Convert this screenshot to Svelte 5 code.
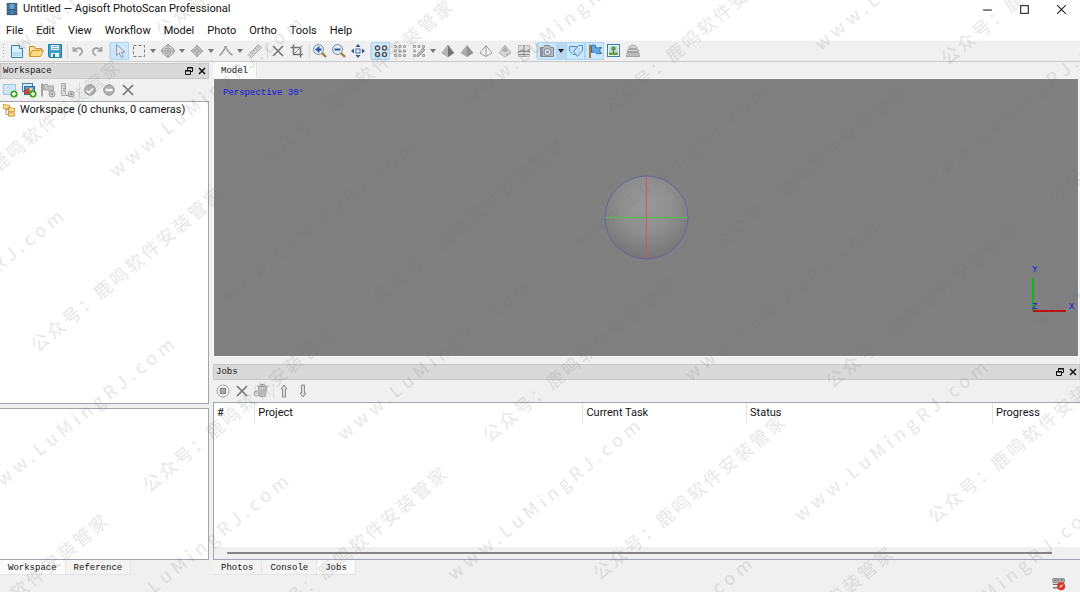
<script lang="ts">
    type Tool = { icon: string; label: string; active?: boolean; menu?: boolean };

    const menus = ["File", "Edit", "View", "Workflow", "Model", "Photo", "Ortho", "Tools", "Help"];

    const toolGroups: Tool[][] = [
        [
            { icon: "new", label: "New" },
            { icon: "open", label: "Open" },
            { icon: "save", label: "Save" },
        ],
        [
            { icon: "undo", label: "Undo" },
            { icon: "redo", label: "Redo" },
        ],
        [
            { icon: "pointer", label: "Navigation", active: true },
            { icon: "marquee", label: "Rectangle Selection", menu: true },
            { icon: "region", label: "Move Region", menu: true },
            { icon: "move", label: "Move Object", menu: true },
            { icon: "polyline", label: "Draw Polyline", menu: true },
            { icon: "ruler", label: "Ruler" },
        ],
        [
            { icon: "remove", label: "Delete Selection" },
            { icon: "crop", label: "Crop Selection" },
        ],
        [
            { icon: "zoomin", label: "Zoom In" },
            { icon: "zoomout", label: "Zoom Out" },
            { icon: "reset", label: "Reset View" },
        ],
        [
            { icon: "points", label: "Point Cloud", active: true },
            { icon: "dense", label: "Dense Cloud" },
            { icon: "classes", label: "Dense Cloud Classes", menu: true },
            { icon: "shaded", label: "Model Shaded" },
            { icon: "solid", label: "Model Solid" },
            { icon: "wire", label: "Model Wireframe" },
            { icon: "textured", label: "Model Textured" },
            { icon: "tiled", label: "Tiled Model" },
        ],
        [
            { icon: "camera", label: "Show Cameras", active: true, menu: true },
            { icon: "shapes", label: "Show Shapes", active: true },
            { icon: "flag", label: "Show Markers", active: true },
            { icon: "image", label: "Show Images" },
            { icon: "align", label: "Show Aligned Chunks" },
        ],
    ];

    const workspaceTools: Tool[] = [
        { icon: "addchunk", label: "Add Chunk" },
        { icon: "addphotos", label: "Add Photos" },
        { icon: "addmarker", label: "Add Marker" },
        { icon: "addscale", label: "Add Scale Bar" },
    ];
    const workspaceActions: Tool[] = [
        { icon: "enable", label: "Enable" },
        { icon: "disable", label: "Disable" },
        { icon: "remove", label: "Remove Items" },
    ];
    const jobTools: Tool[] = [
        { icon: "stop", label: "Stop" },
        { icon: "remove", label: "Remove" },
        { icon: "clear", label: "Clear" },
    ];
    const jobMoves: Tool[] = [
        { icon: "up", label: "Move Up" },
        { icon: "down", label: "Move Down" },
    ];

    const columns = [
        { title: "#", width: 4.7 },
        { title: "Project", width: 37.9 },
        { title: "Current Task", width: 18.9 },
        { title: "Status", width: 28.4 },
        { title: "Progress", width: 10.1 },
    ];

    let leftTab = $state("Workspace");
    let bottomTab = $state("Jobs");

    // centre of the first character of each mark
    const cnMarks = [
        [165, 27], [-63, 215], [40, 342], [152, 482], [-75, 669], [264, 622],
        [270, 155], [382, 293], [492, 432], [602, 570], [612, 105], [723, 240],
        [835, 378], [937, 513], [710, 702], [950, 55], [1058, 193],
    ];
    const urlMarks = [
        [24, 43], [118, 170], [230, 295], [346, 433], [456, 573], [-121, 363],
        [-10, 491], [104, 628], [473, 98], [583, 240], [693, 374], [803, 514],
        [568, 711], [823, 43], [933, 178], [1043, 320], [915, 655],
    ];

    const plus = `<circle cx="12" cy="12" r="3.6" fill="#43a31c"/><path d="M12 10v4M10 12h4" stroke="#fff" stroke-width="1.4"/>`;
    const grayPlus = `<circle cx="12" cy="12" r="3" fill="#ddd" stroke="#999"/><path d="M12 10.500v3M10.500 12h3" stroke="#888"/>`;

    const icons: Record<string, string> = {
        film: `<rect x="2" y="1" width="12" height="14" fill="#34495c"/><rect x="5" y="2" width="6" height="6" fill="#5ba8df"/><rect x="5" y="9" width="6" height="5" fill="#3d83c1"/><path d="M3.500 1.500v13M12.500 1.500v13" stroke="#b9c8d4" stroke-dasharray="1.500 1.500"/>`,
        new: `<path d="M2.500 2.500h8l3 3v9h-11z" fill="#d9effb" stroke="#2e83ae"/><path d="M10.500 2.500v3h3" fill="#fff" stroke="#2e83ae"/><path d="M4 9h8v4H4z" fill="#b8ddf2"/>`,
        open: `<path d="M1.500 13.500v-10h5l1 2h6v3" fill="#f7dda0" stroke="#c88a20"/><path d="M1.500 13.500l3-6h11l-3 6z" fill="#ffd982" stroke="#d59a2c"/>`,
        save: `<path d="M1.500 1.500h13v13h-12l-1-1z" fill="#3f9fcd" stroke="#2479a5"/><path d="M4 2h8v5H4z" fill="#f3fafd"/><path d="M4 10h8v4H4z" fill="#e3f1f8"/><path d="M5 3.500h6M5 5.500h6" stroke="#79a9c0"/><path d="M6 11h2v3H6z" fill="#2479a5"/>`,
        undo: `<path d="M3.500 4v4h4M4 7.500c2-3 7-3.500 8 0 .5 2.500-1 4-3 5" fill="none" stroke="#a0a0a0" stroke-width="1.700"/>`,
        redo: `<path d="M12.500 4v4h-4M12 7.500c-2-3-7-3.500-8 0-.5 2.500 1 4 3 5" fill="none" stroke="#a0a0a0" stroke-width="1.700"/>`,
        pointer: `<path d="M4.500 1.500v11l2.800-2.500 2 4.500 2.200-1-2-4.300h3.700z" fill="#e4e8ec" stroke="#8b98a5"/>`,
        marquee: `<rect x="2.500" y="2.500" width="11" height="11" fill="none" stroke="#7d7d7d" stroke-dasharray="3 2"/>`,
        region: `<ellipse cx="8" cy="8" rx="6.500" ry="5" fill="#d4d4d4" stroke="#b4b4b4"/><path d="M8 1v14M1 8h14M5.500 3.500L8 1l2.500 2.500M5.500 12.500L8 15l2.500-2.500M4 5.500L1.500 8 4 10.500M12 5.500L14.500 8 12 10.500" fill="none" stroke="#9c9c9c"/><rect x="5.500" y="5.500" width="5" height="5" fill="none" stroke="#a5a5a5"/>`,
        move: `<path d="M8 2l2.500 3H9v2h2V5.500L14 8l-3 2.500V9H9v2h1.500L8 14l-2.500-3H7V9H5v1.500L2 8l3-2.500V7h2V5H5.500z" fill="#bbb" stroke="#a5a5a5"/>`,
        polyline: `<path d="M1.500 12.500l2-2 4-6 4.500 6 2.500 1.500" fill="none" stroke="#999" stroke-width="1.500"/><rect x="6" y="3" width="3" height="3" fill="#aaa"/>`,
        ruler: `<path d="M1.500 11.500l10-10 3 3-10 10z" fill="#d2d2d2" stroke="#b0b0b0"/><path d="M4 9l2 2M6 7l1.500 1.500M8 5l2 2M10 3l1.500 1.500" stroke="#a5a5a5"/>`,
        remove: `<path d="M3 3l10 10M13 3L3 13" stroke="#777" stroke-width="1.700"/>`,
        crop: `<path d="M4.500 1.500v10H14M1.500 4.500h10v10" fill="none" stroke="#777" stroke-width="1.500"/><path d="M4.500 11.500l9-9" stroke="#999"/>`,
        zoomin: `<path d="M10 10l4 4" stroke="#a87b38" stroke-width="2.400"/><circle cx="6.500" cy="6.500" r="5" fill="#dcebf7" stroke="#7f8c98"/><path d="M6.500 3.500v6M3.500 6.500h6" stroke="#234f93" stroke-width="1.800"/>`,
        zoomout: `<path d="M10 10l4 4" stroke="#a87b38" stroke-width="2.400"/><circle cx="6.500" cy="6.500" r="5" fill="#dcebf7" stroke="#7f8c98"/><path d="M3.500 6.500h6" stroke="#234f93" stroke-width="1.800"/>`,
        reset: `<rect x="6" y="6" width="4" height="4" fill="#fff" stroke="#3c65a2"/><path d="M8 1l2.500 3h-5zM8 15l2.500-3h-5zM1 8l3-2.500v5zM15 8l-3-2.500v5z" fill="#28569e"/>`,
        points: `<g fill="#f5f8fa" stroke="#4f5357" stroke-width="1.500"><circle cx="4.500" cy="5" r="2"/><circle cx="11.500" cy="5" r="2"/><circle cx="4.500" cy="11.500" r="2"/><circle cx="11.500" cy="11.500" r="2"/></g>`,
        dense: `<g fill="#d8d8d8" stroke="#a0a0a0"><path d="M2.500 2.500h2v2h-2zM7 2.500h2v2H7zM11.500 2.500h2v2h-2zM2.500 7h2v2h-2zM7 7h2v2H7zM11.500 7h2v2h-2zM2.500 11.500h2v2h-2zM7 11.500h2v2H7zM11.500 11.500h2v2h-2z"/></g>`,
        classes: `<path d="M2.500 2.500h2v2h-2zM7 2.500h2v2H7zM11.500 2.500h2v2h-2zM2.500 7h2v2h-2zM2.500 11.500h2v2h-2zM11.500 11.500h2v2h-2z" fill="#d8d8d8" stroke="#a0a0a0"/><path d="M6 12l6-7 2 2-6 6-2 .5z" fill="#bbb" stroke="#999"/>`,
        shaded: `<path d="M8 2L2 10 8 14z" fill="#b4b4b4"/><path d="M8 2l6 8-6 4z" fill="#737373"/><path d="M8 2L2 10l6 4 6-4z" fill="none" stroke="#999" stroke-width=".7"/>`,
        solid: `<path d="M8 2L1.500 10 8 14z" fill="#aaa"/><path d="M8 2l6.500 8L8 14z" fill="#929292"/>`,
        wire: `<path d="M8 2.500L2 10l6 3.500 6-3.500zM8 3v10" fill="#f4f4f4" stroke="#999"/>`,
        textured: `<path d="M8 2L2 10l6 4 6-4z" fill="#d4d4d4" stroke="#aaa" stroke-width=".8"/><path d="M8 3l3 5-3 1-3-1zM9 11l4-1-4 3z" fill="#b0b0b0"/>`,
        tiled: `<path d="M2.500 2.500h11v11h-11z" fill="#ddd" stroke="#aaa" stroke-dasharray="3 1"/><path d="M2 9l4-3 4 2 4-3v4H2z" fill="#aaa"/><path d="M8 2v12M2 8.500h12M3 11.500h10" stroke="#888"/>`,
        camera: `<path d="M1.500 4.500h3l1-2h5l1 2h3v9h-13z" fill="#b9bdc0" stroke="#85898d"/><path d="M2 5h2v8H2z" fill="#92989c"/><circle cx="8.500" cy="9" r="3.500" fill="#f0f3f5" stroke="#777d83"/><circle cx="8.500" cy="9" r="1.700" fill="#6fa2d2"/>`,
        shapes: `<path d="M1.500 3.500h7l3 3.500-3 4.500H5L1.500 8z" fill="#c4e0f5" stroke="#4a90c4"/><path d="M5.500 8.500l5-6h4v5l-5 6z" fill="#d7ebf8" fill-opacity=".6" stroke="#4a90c4"/>`,
        flag: `<path d="M3 1.500v13.500" stroke="#ad7830" stroke-width="2"/><path d="M4.500 2.500c2-1 3 0 4 0v2c2 1 4 0 6 0l-2 3 2 3c-3 0-5 1-6-1-1-1-3 0-4 0z" fill="#63a9e0" stroke="#2b73ad"/>`,
        image: `<rect x="1.500" y="1.500" width="12" height="12" fill="#eef7fc" stroke="#3d7dad"/><path d="M3 3h9v7H3z" fill="#bfe0f4"/><path d="M3 9.500h9V12H3z" fill="#65a534"/><circle cx="7.500" cy="5.500" r="2.300" fill="#65a534"/><path d="M7.500 6v4" stroke="#6c6a2a"/>`,
        align: `<path d="M4 5.500c0-4.500 8-4.500 8 0zM3 6.500h10l1 2H2zM2.500 9.500h11l1 1.500h-13zM1.500 12h13v1.500h-13z" fill="#d4d4d4" stroke="#a5a5a5"/>`,
        addchunk: `<rect x="1" y="2" width="13" height="11" fill="#c6e1f5"/><rect x="1.500" y="2.500" width="12" height="10" fill="none" stroke="#78add3" stroke-dasharray="1 1"/><path d="M3 10l8-7M5 12l8-7M2 6l4-3" stroke="#e8f5fd"/>${plus}`,
        addphotos: `<rect x="1.500" y="1.500" width="10" height="8" fill="#d5edfc" stroke="#397fb0"/><rect x="3.500" y="4.500" width="10" height="8" fill="#5b9bd0" stroke="#2e6d9d"/><path d="M4 12V8l3-2 3 6z" fill="#d7402d"/><circle cx="10" cy="7" r="1.500" fill="#f5d46a"/>${plus}`,
        addmarker: `<path d="M2 1.500v13" stroke="#a5a5a5" stroke-width="2"/><path d="M3.500 2.500h4v1.500h6v5h-5V8h-5z" fill="#c4c4c4" stroke="#a5a5a5"/>${grayPlus}`,
        addscale: `<path d="M2.500 1.500h4v12h-4z" fill="#ddd" stroke="#aaa"/><path d="M4 4h2M4 6.500h2M4 9h2M7 13.500h6" stroke="#999"/>${grayPlus}`,
        enable: `<circle cx="8" cy="8" r="5.300" fill="#b0b0b0" stroke="#999"/><path d="M4.500 8.500l2.500 2L11.500 6" fill="none" stroke="#eee" stroke-width="1.800"/>`,
        disable: `<circle cx="8" cy="8" r="5.300" fill="#b0b0b0" stroke="#999"/><path d="M4.500 8h7" stroke="#f5f5f5" stroke-width="2.400"/>`,
        stop: `<circle cx="8" cy="8" r="6" fill="#f3f3f3" stroke="#a2a2a2"/><circle cx="8" cy="8" r="4" fill="#ddd"/><rect x="5.500" y="5.500" width="5" height="5" fill="#aaa" stroke="#888"/>`,
        clear: `<path d="M5.500 3.500h8l-1 10h-6z" fill="#ccc" stroke="#a5a5a5"/><path d="M4.500 3h10M7 1.500h5M8.500 6v6M11 6v6" stroke="#a5a5a5"/><circle cx="3.500" cy="10.500" r="2.500" fill="#ddd" stroke="#a5a5a5"/>`,
        up: `<path d="M8 2l3 4H9.500v8h-3V6H5z" fill="#ddd" stroke="#8f8f8f"/>`,
        down: `<path d="M8 14l3-4H9.500V2h-3v8H5z" fill="#ddd" stroke="#8f8f8f"/>`,
        tree: `<path d="M4.500 6v7h4M4.500 7.500h4" fill="none" stroke="#888"/><path d="M1.500 1.500h3l1 1h3v4h-7zM7.500 5h3l1 1h3v4h-7zM7.500 10.500h3l1 1h3v3.500h-7z" fill="#ffdc8b" stroke="#cc922c"/>`,
        network: `<path d="M1 2h13v4H1z" fill="#bbb" stroke="#777"/><path d="M3 3.500h2M6 3.500h2M10 3.500h2M1 8.500h7M1 12.500h9" stroke="#666" stroke-width="1.500"/><circle cx="10.500" cy="10.500" r="4.500" fill="#d93320"/><path d="M8.500 12.500l4-4M9 9.500l3 2" stroke="#fff"/>`,
    };
</script>

{#snippet glyph(name: string)}
    <svg class="glyph" viewBox="0 0 16 16" aria-hidden="true">{@html icons[name]}</svg>
{/snippet}

{#snippet tool(item: Tool)}
    <div class="tool" class:active={item.active}>
        <button aria-label={item.label} title={item.label}>{@render glyph(item.icon)}</button>
        {#if item.menu}
            <button class="drop" aria-label="{item.label} options">
                <svg viewBox="0 0 8 4" aria-hidden="true"><path d="M1 0h6L4 4z" fill={item.active ? "#222" : "#777"} /></svg>
            </button>
        {/if}
    </div>
{/snippet}

{#snippet dockTitle(title: string)}
    <header class="dock-title">
        <h2>{title}</h2>
        <button aria-label="Float {title}">
            <svg viewBox="0 0 10 10" aria-hidden="true">
                <path d="M3.500 4V1.500h5v4H7M3.500 2h5M1.500 4.500h5v4h-5zM1.500 5h5" fill="none" stroke="#111" />
            </svg>
        </button>
        <button aria-label="Close {title}">
            <svg viewBox="0 0 10 10" aria-hidden="true"><path d="M2 2l6 6M8 2L2 8" stroke="#111" stroke-width="1.500" /></svg>
        </button>
    </header>
{/snippet}

<div class="window">
    <header class="titlebar">
        {@render glyph("film")}
        <h1>Untitled — Agisoft PhotoScan Professional</h1>
        <div class="controls">
            <button aria-label="Minimize"><svg viewBox="0 0 10 10"><path d="M1 5.500h8" stroke="#222" /></svg></button>
            <button aria-label="Maximize"><svg viewBox="0 0 10 10"><rect x="1.500" y="1.500" width="7" height="7" fill="none" stroke="#222" /></svg></button>
            <button aria-label="Close"><svg viewBox="0 0 10 10"><path d="M1 1l8 8M9 1L1 9" stroke="#222" /></svg></button>
        </div>
    </header>

    <nav class="menubar">
        {#each menus as menu}
            <button>{menu}</button>
        {/each}
    </nav>

    <div class="toolbar main-tools">
        {#each toolGroups as group, i}
            {#if i > 0}<span class="sep"></span>{/if}
            {#each group as item}
                {@render tool(item)}
            {/each}
        {/each}
    </div>

    <main>
        <aside>
            {@render dockTitle("Workspace")}
            <div class="toolbar">
                {#each workspaceTools as item}{@render tool(item)}{/each}
                <span class="sep"></span>
                {#each workspaceActions as item}{@render tool(item)}{/each}
            </div>
            <div class="tree">
                <div class="root">{@render glyph("tree")}<span>Workspace (0 chunks, 0 cameras)</span></div>
            </div>
            <div class="details"></div>
            <div class="tabs">
                {#each ["Workspace", "Reference"] as tab}
                    <button class:current={leftTab === tab} onclick={() => (leftTab = tab)}>{tab}</button>
                {/each}
            </div>
        </aside>

        <section class="center">
            <div class="tabs top"><button class="current">Model</button></div>
            <div class="viewport">
                <span class="projection">Perspective 30°</span>
                <svg class="ball" viewBox="0 0 85 85" aria-hidden="true">
                    <defs>
                        <radialGradient id="shade" cx="50%" cy="36%" r="62%">
                            <stop offset="0" stop-color="#989898" />
                            <stop offset=".5" stop-color="#8f8f8f" />
                            <stop offset="1" stop-color="#777" />
                        </radialGradient>
                    </defs>
                    <circle cx="42.500" cy="42.500" r="41.500" fill="url(#shade)" stroke="#6464a4" />
                    <path d="M1 42.500h83" stroke="#62b062" stroke-width="1.500" />
                    <path d="M42.500 1v83" stroke="#c95858" />
                </svg>
                <svg class="axes" viewBox="0 0 50 52" aria-hidden="true">
                    <path d="M7 14v34" stroke="#12b812" stroke-width="2" />
                    <path d="M7 47h33" stroke="#c00d0d" stroke-width="2" />
                    <text x="6" y="8">Y</text>
                    <text x="6" y="45">Z</text>
                    <text x="43" y="45">X</text>
                </svg>
            </div>

            {@render dockTitle("Jobs")}
            <div class="toolbar">
                {#each jobTools as item}{@render tool(item)}{/each}
                <span class="sep"></span>
                {#each jobMoves as item}{@render tool(item)}{/each}
            </div>
            <div class="jobs">
                <table>
                    <thead>
                        <tr>
                            {#each columns as column}
                                <th style="width: {column.width}%">{column.title}</th>
                            {/each}
                        </tr>
                    </thead>
                </table>
                <div class="scroll"><span></span></div>
            </div>
            <div class="tabs">
                {#each ["Photos", "Console", "Jobs"] as tab}
                    <button class:current={bottomTab === tab} onclick={() => (bottomTab = tab)}>{tab}</button>
                {/each}
            </div>
        </section>
    </main>

    <footer>{@render glyph("network")}</footer>

    <svg class="marks" aria-hidden="true">
        {#each cnMarks as [x, y]}
            <text class="cn" transform="translate({x} {y}) rotate(-40)" x="-9" y="7">公众号：鹿鸣软件安装管家</text>
        {/each}
        {#each urlMarks as [x, y]}
            <text class="url" transform="translate({x} {y}) rotate(-39)" x="-7" y="5">www.LuMingRJ.com</text>
        {/each}
    </svg>
</div>

<style>
    :global(body) {
        margin: 0;
    }

    .window {
        position: relative;
        display: flex;
        flex-direction: column;
        height: 100vh;
        overflow: hidden;
        background: #f0f0f0;
        color: #111;
        font: 11px/16px Roboto, "Noto Sans CJK SC", sans-serif;
    }

    button {
        display: flex;
        align-items: center;
        justify-content: center;
        padding: 0;
        border: 0;
        background: none;
        color: inherit;
        font: inherit;
    }

    h1,
    h2 {
        margin: 0;
        font: inherit;
    }

    .glyph {
        flex: none;
        width: 14px;
        height: 14px;
    }

    .titlebar {
        display: flex;
        align-items: center;
        gap: 4px;
        height: 18px;
        padding-left: 5px;
        background: #fff;
    }

    .controls {
        display: flex;
        margin-left: auto;
    }

    .controls button {
        width: 37px;
    }

    .controls svg {
        width: 11px;
        height: 11px;
    }

    .menubar {
        display: flex;
        gap: 13px;
        padding: 5px 6px 1px;
        background: #fff;
    }

    .toolbar {
        display: flex;
        align-items: center;
        height: 22px;
    }

    .toolbar .glyph {
        width: 16px;
        height: 16px;
    }

    .main-tools {
        height: 20px;
        padding-left: 7px;
        border-top: 1px solid #f8f8f8;
        border-bottom: 1px solid #c9c9c9;
        background: repeating-linear-gradient(#b8b8b8 0 1px, transparent 1px 3px) 3px 50% / 1px 14px no-repeat;
    }

    .tool {
        display: flex;
        box-sizing: border-box;
        height: 18px;
        border-radius: 1px;
    }

    .tool button {
        width: 19px;
    }

    .tool .drop {
        width: 10px;
    }

    .tool.active {
        background: #cce8ff;
        box-shadow: inset 0 0 0 1px #a9d6f8;
    }

    .tool.active .drop {
        background: #b8d8f0;
    }

    .drop svg {
        width: 8px;
        height: 4px;
    }

    .sep {
        width: 1px;
        height: 14px;
        margin-left: 3px;
        background: #d8d8d8;
    }

    main {
        display: flex;
        flex: 1;
        gap: 4px;
        min-height: 0;
    }

    aside {
        display: flex;
        flex: none;
        flex-direction: column;
        width: 209px;
        padding-top: 1px;
    }

    .dock-title {
        display: flex;
        box-sizing: border-box;
        align-items: center;
        flex: none;
        gap: 3px;
        height: 16px;
        padding: 0 1px 0 2px;
        border: 1px solid #c8c8c8;
        background: #d9d9d9;
    }

    .dock-title h2 {
        flex: 1;
    }

    .dock-title h2,
    .tabs,
    .projection,
    .axes {
        font: 9px/14px "Liberation Mono", monospace;
    }

    .dock-title svg {
        width: 10px;
        height: 10px;
    }

    .tree,
    .details,
    .jobs {
        box-sizing: border-box;
        border: 1px solid #a0a4ae;
        background: #fff;
    }

    .tree,
    .details {
        border-left: 0;
    }

    .tree {
        flex: 2;
        margin-bottom: 4px;
    }

    .details {
        flex: 1;
    }

    .root {
        display: flex;
        align-items: center;
        gap: 4px;
        padding-left: 2px;
    }

    .tabs {
        display: flex;
        flex: none;
        height: 15px;
    }

    .tabs button {
        padding: 2px 8px 0;
        border-right: 1px solid #e4e4e4;
        border-bottom: 1px solid #e4e4e4;
        background: #f3f3f3;
    }

    .tabs .current {
        background: #fafafa;
    }

    .tabs.top {
        height: 17px;
    }

    .center {
        display: flex;
        flex: 1;
        flex-direction: column;
        min-width: 0;
    }

    .viewport {
        position: relative;
        display: flex;
        flex: 16;
        align-items: center;
        justify-content: center;
        margin: 0 2px 8px 1px;
        background: #808080;
        box-shadow: 0 0 0 1px #fafafa;
        color: #1414e0;
    }

    .projection {
        position: absolute;
        top: 7px;
        left: 9px;
    }

    .ball {
        width: 85px;
        height: 85px;
    }

    .axes {
        position: absolute;
        right: 2px;
        bottom: 40px;
        width: 50px;
        height: 52px;
        fill: #1414e0;
    }

    .jobs {
        display: flex;
        flex: 9;
        flex-direction: column;
        justify-content: space-between;
        border-right: 0;
    }

    table {
        width: 100%;
        border-collapse: collapse;
        table-layout: fixed;
    }

    th {
        box-sizing: border-box;
        height: 20px;
        padding: 0 3px;
        border-right: 1px solid #e2e2e2;
        font-weight: normal;
        text-align: left;
    }

    th:last-child {
        border-right: 0;
    }

    .scroll {
        padding: 5px 28px 5px 13px;
        background: #f0f0f0;
    }

    .scroll span {
        display: block;
        height: 2px;
        background: #858585;
    }

    footer {
        display: flex;
        flex: none;
        align-items: center;
        justify-content: flex-end;
        height: 17px;
        padding-right: 14px;
    }

    .marks {
        position: absolute;
        inset: 0;
        width: 100%;
        height: 100%;
        fill: #747474;
        fill-opacity: 0.17;
        pointer-events: none;
        font: 500 18px "Noto Sans CJK SC", sans-serif;
    }

    .cn {
        letter-spacing: 0.14em;
    }

    .url {
        letter-spacing: 0.25em;
    }
</style>
